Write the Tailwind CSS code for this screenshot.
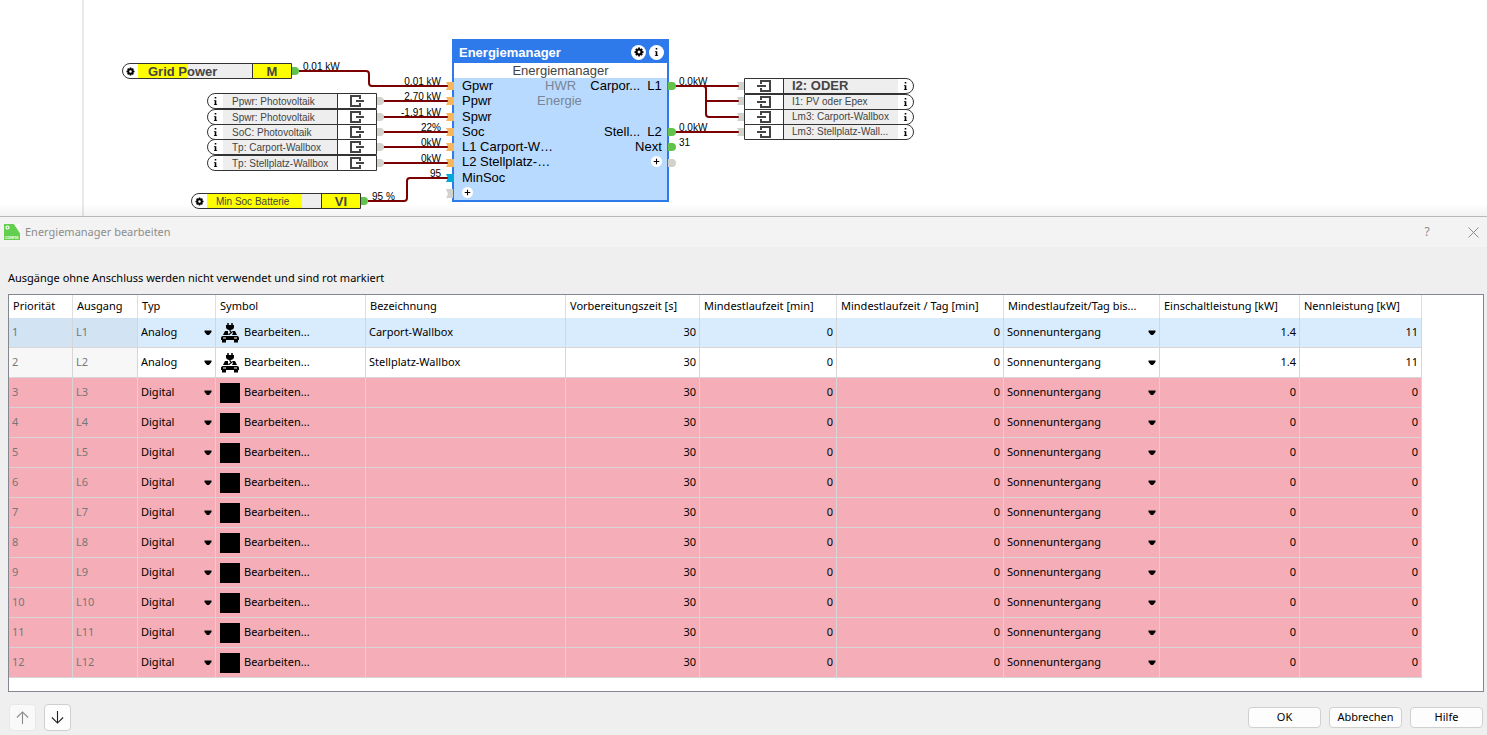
<!doctype html>
<html lang="de">
  <head>
    <meta charset="UTF-8" />
    <meta name="viewport" content="width=device-width, initial-scale=1.0" />
    <title>Energiemanager bearbeiten</title>
    <script src="https://cdn.jsdelivr.net/npm/@tailwindcss/browser@4"></script>
  </head>

  <body class="flex min-h-screen flex-col bg-white font-['Noto_Sans',sans-serif] text-[11px] text-black">
    <!-- shared icons -->
    <svg class="hidden">
      <symbol id="gear" viewBox="0 0 16 16">
        <circle cx="8" cy="8" r="4" fill="none" stroke="currentColor" stroke-width="3.4" />
        <path d="M8 .8v3M8 12.2v3M.8 8h3M12.2 8h3M2.9 2.9l2 2M11.1 11.1l2 2M2.9 13.1l2-2M11.1 4.9l2-2" stroke="currentColor" stroke-width="2.8" />
      </symbol>
      <symbol id="info" viewBox="0 0 8 10">
        <path d="M3 0h2v2H3zM2 4h3v5h1v1H2V9h1V5H2z" fill="currentColor" />
      </symbol>
      <symbol id="out" viewBox="0 0 14 12">
        <path d="M10 4V1H1v10h9V8M6 6h8" fill="none" stroke="currentColor" stroke-width="2" />
      </symbol>
      <symbol id="in" viewBox="0 0 14 12">
        <path d="M4 4V1h9v10H4V8M0 6h9" fill="none" stroke="currentColor" stroke-width="2" />
      </symbol>
      <symbol id="plus" viewBox="0 0 12 12">
        <circle cx="6" cy="6" r="6" fill="#fff" />
        <path d="M6 3v6M3 6h6" stroke="#000" stroke-width="1.2" />
      </symbol>
      <symbol id="wallbox" viewBox="0 0 20 20">
        <path d="M8 0v3M12 0v3" stroke="#000" stroke-width="1.5" />
        <path d="M6 2h8v2c0 1.5-1 2.500-3 3H9c-2-.5-3-1.500-3-3z" />
        <path d="M10 6v2l1.500 1.500L9 11.500" fill="none" stroke="#000" stroke-width="1.2" />
        <path d="M5 8h3v2l1 2h3l1-2-1-2h3l2 4H3z" />
        <path d="M3 13h14c1.500.3 2 1 2 2v2H1v-2c0-1 .5-1.700 2-2z" />
        <path d="M2 16h4v3.500H2zM14 16h4v3.500h-4z" />
        <path d="M3 15h3M14 15h3" stroke="#fff" />
      </symbol>
      <symbol id="arrow" viewBox="0 0 8 6">
        <path d="M.5 .5h7V2L5 5H3L.5 2z" />
      </symbol>
    </svg>

    <!-- programming canvas -->
    <main class="relative h-[216px] shrink-0 overflow-hidden font-['Liberation_Sans',Arial,sans-serif] text-[10px] leading-3 text-[#444]">
      <div class="absolute inset-y-0 left-[82px] w-0.5 bg-[#e9e9e9]"></div>

      <!-- wire labels -->
      <div class="text-black">
        <span class="absolute top-[61px] left-[303px]">0.01 kW</span>
        <span class="absolute top-[76px] left-[391px] w-[50px] text-right">0.01 kW</span>
        <span class="absolute top-[91px] left-[391px] w-[50px] text-right">2.70 kW</span>
        <span class="absolute top-[107px] left-[391px] w-[50px] text-right">-1.91 kW</span>
        <span class="absolute top-[122px] left-[391px] w-[50px] text-right">22%</span>
        <span class="absolute top-[137px] left-[391px] w-[50px] text-right">0kW</span>
        <span class="absolute top-[153px] left-[391px] w-[50px] text-right">0kW</span>
        <span class="absolute top-[168px] left-[391px] w-[50px] text-right">95</span>
        <span class="absolute top-[191px] left-[372px]">95 %</span>
        <span class="absolute top-[76px] left-[679px]">0.0kW</span>
        <span class="absolute top-[122px] left-[679px]">0.0kW</span>
        <span class="absolute top-[137px] left-[679px]">31</span>
      </div>

      <!-- Grid Power -->
      <div class="absolute top-[63px] left-[122px] flex h-4 w-[170px] overflow-hidden rounded-l-full border border-[#333] bg-white text-[13px] leading-4 font-bold">
        <svg class="mx-[3px] mt-[3px] size-[9px] text-black"><use href="#gear" /></svg>
        <span class="flex-1 bg-linear-to-r from-[#ff0] from-[50px] to-[#eee] to-[50px] pl-[10px] whitespace-nowrap">Grid Power</span>
        <span class="w-[39px] border-l border-[#333] bg-[#ff0] text-center">M</span>
      </div>

      <!-- Min Soc Batterie -->
      <div class="absolute top-[193px] left-[191px] flex h-4 w-[170px] overflow-hidden rounded-l-full border border-[#333] bg-white leading-4">
        <svg class="mx-[3px] mt-[3px] size-[9px] text-black"><use href="#gear" /></svg>
        <span class="flex-1 bg-linear-to-r from-[#ff0] from-[95px] to-[#eee] to-[95px] pl-[9px] whitespace-nowrap">Min Soc Batterie</span>
        <span class="w-[39px] border-l border-[#333] bg-[#ff0] text-center text-[13px] font-bold">VI</span>
      </div>

      <!-- references on both sides of the block, filled in below -->
      <div id="sources"></div>
      <div id="targets"></div>

      <!-- Energiemanager block -->
      <section class="absolute top-[39px] left-[452px] flex h-[163px] w-[217px] flex-col border-2 border-[#2f7aea] bg-[#b8daff] text-[13px] leading-[15px] text-black">
        <header class="flex h-[22px] items-center gap-[3px] bg-[#2f7aea] pr-[3px] pl-[5px] text-white">
          <h1 class="flex-1 font-bold">Energiemanager</h1>
          <span class="flex size-[15px] items-center justify-center rounded-full bg-white text-black">
            <svg class="size-[10px]"><use href="#gear" /></svg>
          </span>
          <span class="flex size-[15px] items-center justify-center rounded-full bg-white text-black">
            <svg class="h-2 w-[7px]"><use href="#info" /></svg>
          </span>
        </header>
        <p class="bg-white text-center text-[#444]">Energiemanager</p>
        <div class="grid flex-1 grid-cols-[75px_1fr_80px] grid-rows-8 items-center pr-[10px] pl-2 whitespace-nowrap">
          <span>Gpwr</span><span class="pl-2 text-[#7b8594]">HWR</span><span class="text-right">Carpor...&nbsp; L1</span>
          <span>Ppwr</span><span class="text-[#7b8594]">Energie</span><span></span>
          <span class="col-span-3">Spwr</span>
          <span>Soc</span><span></span><span class="text-right">Stell...&nbsp; L2</span>
          <span>L1 Carport-W…</span><span></span><span class="text-right">Next</span>
          <span>L2 Stellplatz-…</span><span></span><svg class="size-[11px] justify-self-end"><use href="#plus" /></svg>
          <span class="col-span-3">MinSoc</span>
          <svg class="size-[11px]"><use href="#plus" /></svg>
        </div>
      </section>

      <!-- wires and ports -->
      <svg class="absolute inset-0 h-full w-full">
        <g fill="none" stroke="#7d0000" stroke-width="2">
          <path d="M299 71H366q3 0 3 3V83q0 3 3 3H448M383 101H448M383 117H448M383 132H448M383 147H448M383 163H448" />
          <path d="M368 201H404q3 0 3-3V181q0-3 3-3H448" />
          <path d="M675 86H740M675 132H740M703 86q3 0 3 3V101H740M706 101V114q0 3 3 3H740" />
        </g>
        <g fill="#f9b55c">
          <path d="M446 82h8v8h-8l2-4zM446 97h8v8h-8l2-4zM446 113h8v8h-8l2-4zM446 128h8v8h-8l2-4zM446 143h8v8h-8l2-4zM446 159h8v8h-8l2-4z" />
        </g>
        <path fill="#00a8dc" d="M446 174h8v8h-8l2-4z" />
        <g fill="#d2d2cc">
          <path d="M446 189h7v9h-7l2-4z" />
          <path d="M737 82h7v8h-7l2-4zM737 97h7v8h-7l2-4zM737 113h7v8h-7l2-4zM737 128h7v8h-7l2-4z" />
          <path d="M377 97h3a4 4 0 0 1 0 8h-3zM377 113h3a4 4 0 0 1 0 8h-3zM377 128h3a4 4 0 0 1 0 8h-3zM377 143h3a4 4 0 0 1 0 8h-3zM377 159h3a4 4 0 0 1 0 8h-3zM668 159h4a4 4 0 0 1 0 8h-4z" />
        </g>
        <g fill="#62c34c">
          <path d="M292 67h3a4 4 0 0 1 0 8h-3zM361 197h3a4 4 0 0 1 0 8h-3z" />
          <path d="M668 82h4a4 4 0 0 1 0 8h-4zM668 128h4a4 4 0 0 1 0 8h-4zM668 143h4a4 4 0 0 1 0 8h-4z" />
        </g>
      </svg>
      <div class="absolute inset-x-0 bottom-0 h-3 bg-linear-to-b from-transparent to-black/5"></div>
    </main>

    <!-- dialog -->
    <div role="dialog" aria-labelledby="dialog-title" class="flex flex-1 flex-col border-t border-[#b8b8b8] bg-[#efefef]">
      <div class="flex h-[30px] items-center bg-[#f3f3f3] pl-1 text-[#8c8c8c]">
        <svg class="size-4" viewBox="0 0 16 16">
          <path d="M0 0h10l6 9v7H0z" fill="#62d04e" />
          <path d="M10 0h6v9z" fill="#f9fbf9" />
          <circle cx="3.5" cy="3.5" r="1.5" fill="none" stroke="#fff" stroke-width="1.2" />
          <text x="1" y="15" fill="#fff" font-size="3.5" font-weight="bold">CONFIG</text>
        </svg>
        <h2 id="dialog-title" class="flex-1 pl-[5px]">Energiemanager bearbeiten</h2>
        <button class="w-16 text-xs" aria-label="Hilfe anzeigen">?</button>
        <button class="flex w-7 justify-center" aria-label="Schließen">
          <svg class="size-[11px]" viewBox="0 0 11 11"><path d="M.5 .5l10 10M10.5 .5l-10 10" stroke="currentColor" /></svg>
        </button>
      </div>

      <p class="mt-[23px] mb-[9px] pl-2 leading-[15px]">Ausgänge ohne Anschluss werden nicht verwendet und sind rot markiert</p>

      <div class="mr-[3px] ml-2 flex-1 border border-[#828790] bg-white">
        <table class="w-[1413px] table-fixed border-separate border-spacing-0 text-left">
          <colgroup>
            <col class="w-16" />
            <col class="w-[65px]" />
            <col class="w-[78px]" />
            <col class="w-[150px]" />
            <col class="w-[200px]" />
            <col class="w-[134px]" />
            <col class="w-[137px]" />
            <col class="w-[167px]" />
            <col class="w-[156px]" />
            <col class="w-[140px]" />
            <col class="w-[122px]" />
          </colgroup>
          <thead>
            <tr class="h-[23px] whitespace-nowrap *:border-r *:border-[#dedede] *:pl-1 *:font-normal">
              <th>Priorität</th>
              <th>Ausgang</th>
              <th>Typ</th>
              <th>Symbol</th>
              <th>Bezeichnung</th>
              <th>Vorbereitungszeit [s]</th>
              <th>Mindestlaufzeit [min]</th>
              <th>Mindestlaufzeit / Tag [min]</th>
              <th>Mindestlaufzeit/Tag bis...</th>
              <th>Einschaltleistung [kW]</th>
              <th>Nennleistung [kW]</th>
            </tr>
          </thead>
          <tbody id="rows"></tbody>
        </table>
      </div>

      <div class="flex h-[43px] items-center pt-2 pr-1 pl-[9px]">
        <button disabled aria-label="Nach oben" class="mr-2 flex size-[27px] items-center justify-center rounded border border-[#e8e8e8] bg-[#f9f9f9] text-[#8a8a8a]">
          <svg class="size-[13px]" viewBox="0 0 14 14"><path d="M7 14V1M1 7l6-6 6 6" fill="none" stroke="currentColor" stroke-width="1.2" /></svg>
        </button>
        <button aria-label="Nach unten" class="flex size-[27px] items-center justify-center rounded border border-[#cfcfcf] bg-[#fdfdfd] text-[#222]">
          <svg class="size-[13px]" viewBox="0 0 14 14"><path d="M7 0V13M1 7l6 6 6-6" fill="none" stroke="currentColor" stroke-width="1.2" /></svg>
        </button>
        <div class="ml-auto flex gap-2">
          <button class="h-[21px] w-[73px] rounded border border-[#d0d0d0] bg-[#fdfdfd]">OK</button>
          <button class="h-[21px] w-[73px] rounded border border-[#d0d0d0] bg-[#fdfdfd]">Abbrechen</button>
          <button class="h-[21px] w-[73px] rounded border border-[#d0d0d0] bg-[#fdfdfd]">Hilfe</button>
        </div>
      </div>
    </div>

    <script>
      const sources = [
        [93, "Ppwr: Photovoltaik"],
        [109, "Spwr: Photovoltaik"],
        [124, "SoC: Photovoltaik"],
        [139, "Tp: Carport-Wallbox"],
        [155, "Tp: Stellplatz-Wallbox"],
      ];
      document.getElementById("sources").innerHTML = sources
        .map(
          ([top, name]) => `
        <div class="absolute left-[207px] flex h-4 w-[170px] overflow-hidden rounded-l-full border border-[#333] bg-white leading-4" style="top: ${top}px">
          <svg class="mx-1 mt-[3px] h-2 w-[7px] text-black"><use href="#info" /></svg>
          <span class="flex-1 bg-[#eee] pl-[9px] whitespace-nowrap">${name}</span>
          <span class="flex w-[39px] items-center justify-center border-l border-[#333]"><svg class="h-3 w-[14px]"><use href="#out" /></svg></span>
        </div>`,
        )
        .join("");

      const targets = [
        [78, "I2: ODER", "text-[13px] font-bold"],
        [94, "I1: PV oder Epex", ""],
        [109, "Lm3: Carport-Wallbox", ""],
        [124, "Lm3: Stellplatz-Wall...", ""],
      ];
      document.getElementById("targets").innerHTML = targets
        .map(
          ([top, name, style]) => `
        <div class="absolute left-[744px] flex h-4 w-[170px] overflow-hidden rounded-r-full border border-[#333] bg-white leading-[14px]" style="top: ${top}px">
          <span class="flex w-[39px] items-center justify-center border-r border-[#333]"><svg class="h-3 w-[14px]"><use href="#in" /></svg></span>
          <span class="flex-1 bg-[#eee] pl-2 whitespace-nowrap ${style}">${name}</span>
          <svg class="mx-1 mt-[3px] h-2 w-[7px] text-black"><use href="#info" /></svg>
        </div>`,
        )
        .join("");

      const names = ["Carport-Wallbox", "Stellplatz-Wallbox"];
      let rows = "";
      for (let i = 1; i <= 12; i++) {
        const used = i <= 2;
        const rowColor = i === 1 ? "bg-[#d9ecfd]" : used ? "bg-white" : "bg-[#f5aeb7]";
        const lockedColor = i === 1 ? "bg-[#d2e4f4]" : used ? "bg-[#f7f7f7]" : "";
        const icon = used
          ? '<svg class="size-5"><use href="#wallbox" /></svg>'
          : '<span class="size-5 bg-black"></span>';
        rows += `
        <tr class="h-[30px] ${rowColor} *:border-r *:border-b *:border-[#d8d5d7]">
          <td class="pl-[3px] text-[#777] ${lockedColor}">${i}</td>
          <td class="pl-[3px] text-[#777] ${lockedColor}">L${i}</td>
          <td class="pr-[3px] pl-[3px]">
            <div class="flex items-center">
              <select aria-label="Typ L${i}" class="min-w-0 flex-1 appearance-none">
                <option>${used ? "Analog" : "Digital"}</option>
              </select>
              <svg class="h-1.5 w-2"><use href="#arrow" /></svg>
            </div>
          </td>
          <td class="pl-1"><button class="flex items-center gap-1">${icon}Bearbeiten...</button></td>
          <td class="pl-[3px]">${names[i - 1] || ""}</td>
          <td class="pr-[3px] text-right">30</td>
          <td class="pr-[3px] text-right">0</td>
          <td class="pr-[3px] text-right">0</td>
          <td class="pr-[3px] pl-[3px]">
            <div class="flex items-center">
              <select aria-label="Mindestlaufzeit bis L${i}" class="min-w-0 flex-1 appearance-none">
                <option>Sonnenuntergang</option>
              </select>
              <svg class="h-1.5 w-2"><use href="#arrow" /></svg>
            </div>
          </td>
          <td class="pr-[3px] text-right">${used ? "1.4" : "0"}</td>
          <td class="pr-[3px] text-right">${used ? "11" : "0"}</td>
        </tr>`;
      }
      document.getElementById("rows").innerHTML = rows;
    </script>
  </body>
</html>
